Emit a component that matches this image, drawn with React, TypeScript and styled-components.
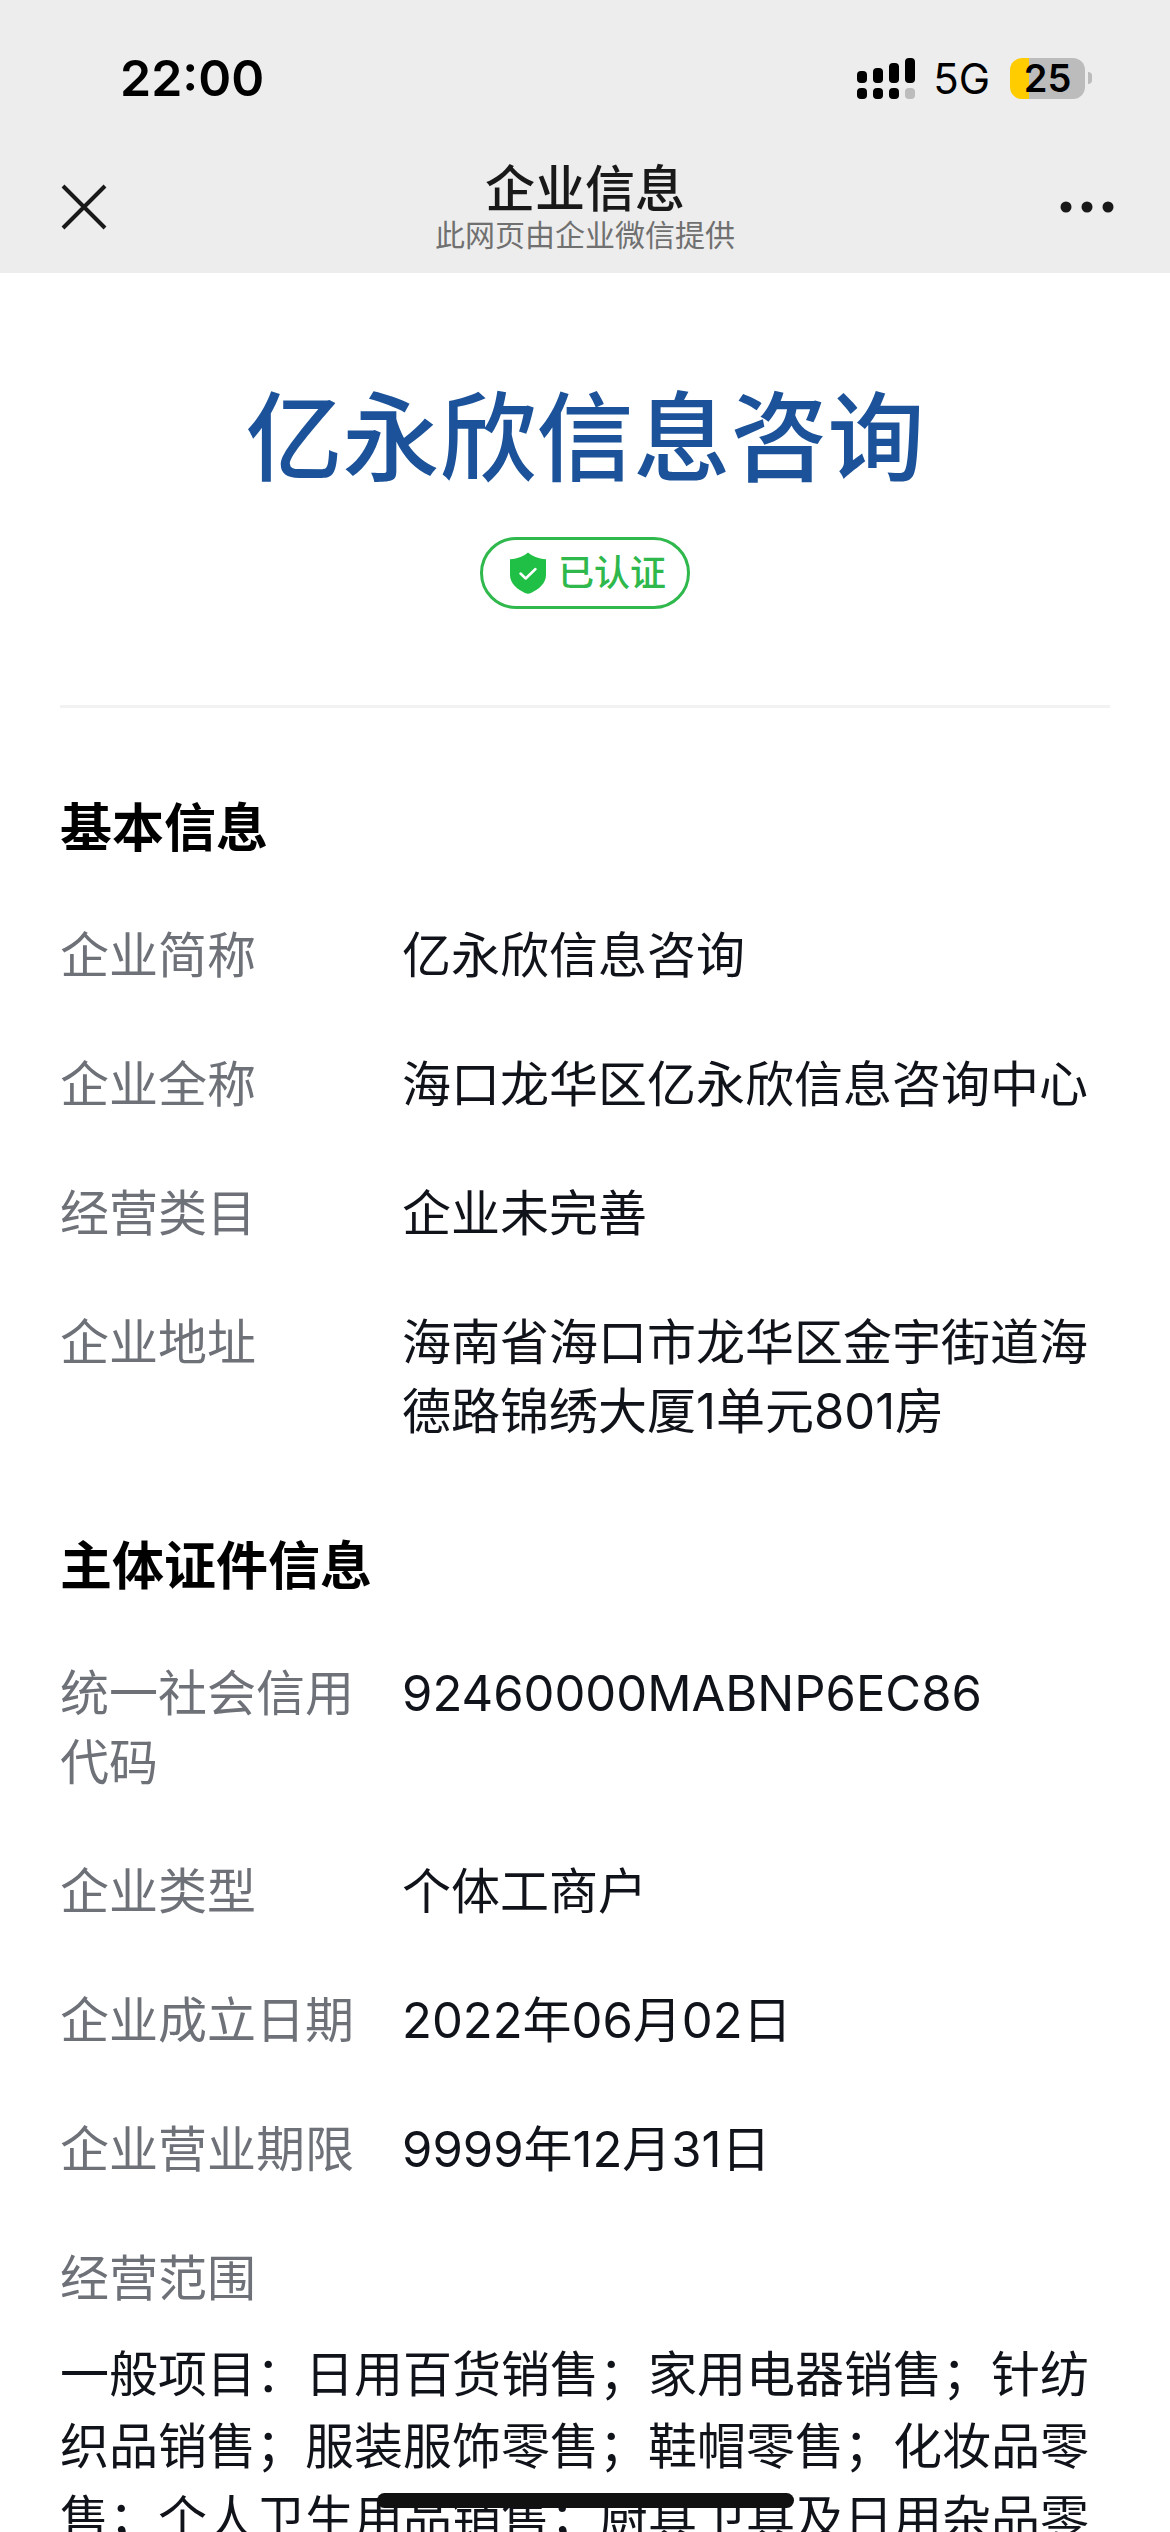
import React from "react";
import styled, { createGlobalStyle } from "styled-components";

const GlobalStyle = createGlobalStyle`
  *, *::before, *::after {
    box-sizing: border-box;
  }
  body {
    margin: 0;
    background: #fff;
    color: #11131a;
    font-family: Inter, "Noto Sans CJK SC", sans-serif;
    font-size: 49px;
    line-height: 69px;
  }
`;

const Screen = styled.div`
  display: flex;
  flex-direction: column;
  height: 100vh;
`;

const TopBar = styled.header`
  flex: none;
  background: #ededed;
`;

const StatusBar = styled.div`
  display: flex;
  align-items: center;
  justify-content: space-between;
  height: 156px;
  padding: 0 78px 0 120px;
  color: #000;
`;

const Clock = styled.time`
  font-size: 50px;
  font-weight: 600;
`;

const Indicators = styled.div`
  display: flex;
  align-items: center;
`;

const Network = styled.span`
  margin: 0 20px 0 18px;
  font-size: 42px;
`;

const Battery = styled.div`
  display: flex;
  align-items: center;
  gap: 3px;
`;

const BatteryBody = styled.div`
  display: flex;
  align-items: center;
  justify-content: center;
  width: 75px;
  height: 41px;
  border-radius: 12px;
  background: linear-gradient(to right, #ffcc00 25%, #bcbcbc 25%);
  font-size: 38px;
  font-weight: 600;
  line-height: 41px;
`;

const BatteryTip = styled.span`
  width: 4px;
  height: 12px;
  border-radius: 0 4px 4px 0;
  background: #bcbcbc;
`;

const NavBar = styled.nav`
  display: grid;
  grid-template-columns: 120px 1fr 120px;
  align-items: center;
  height: 117px;
  padding: 0 48px 16px;
  color: #191919;
`;

const NavButton = styled.button<{ $end?: boolean }>`
  display: flex;
  justify-content: ${(p) => (p.$end ? "flex-end" : "flex-start")};
  align-items: center;
  height: 72px;
  padding: ${(p) => (p.$end ? "0 8px" : "0 10px")};
  border: 0;
  background: none;
  color: inherit;
  cursor: pointer;
`;

const NavTitles = styled.div`
  display: flex;
  flex-direction: column;
  align-items: center;
`;

const NavTitle = styled.div`
  font-size: 50px;
  font-weight: 500;
  line-height: 56px;
`;

const NavSubtitle = styled.div`
  color: #707070;
  font-size: 30px;
  line-height: 36px;
`;

const Content = styled.main`
  flex: 1;
  min-height: 0;
  overflow-y: auto;
  padding: 0 60px;
  scrollbar-width: none;
`;

const Hero = styled.section`
  display: flex;
  flex-direction: column;
  align-items: center;
  gap: 31px;
  padding: 97px 0 96px;
  border-bottom: 3px solid #f2f2f2;
`;

const CompanyName = styled.h1`
  margin: 0;
  color: #1b5299;
  font-size: 97px;
  font-weight: 500;
  line-height: 136px;
`;

const Badge = styled.div`
  display: flex;
  align-items: center;
  gap: 12px;
  height: 72px;
  padding: 0 21px 0 27px;
  border: 3px solid #2fb84c;
  border-radius: 36px;
  color: #2fb84c;
  font-size: 36px;
  font-weight: 500;
`;

const Section = styled.section`
  padding-top: 84px;
`;

const SectionTitle = styled.h2`
  margin: 0 0 56px;
  color: #000;
  font-size: 52px;
  font-weight: 700;
  line-height: 73px;
`;

const Fields = styled.dl`
  display: flex;
  flex-direction: column;
  gap: 60px;
  margin: 0;
`;

const Field = styled.div<{ $stacked?: boolean }>`
  display: grid;
  grid-template-columns: ${(p) => (p.$stacked ? "1fr" : "294px 1fr")};
  gap: ${(p) => (p.$stacked ? "26px" : "48px")};
`;

const Label = styled.dt`
  color: #6e7278;
`;

const Value = styled.dd<{ $long?: boolean }>`
  margin: 0;
  line-height: ${(p) => (p.$long ? "72px" : "69px")};
`;

const HomeIndicator = styled.div`
  position: fixed;
  bottom: 24px;
  left: 50%;
  width: 417px;
  height: 15px;
  margin-left: -208px;
  border-radius: 8px;
  background: #111;
`;

const SignalIcon = () => (
  <svg width="58" height="41" viewBox="0 0 58 41" aria-hidden="true">
    <rect x="0" y="13" width="10" height="12" rx="4" />
    <rect x="16" y="10" width="10" height="15" rx="4" />
    <rect x="32" y="5" width="10" height="20" rx="4" />
    <rect x="48" y="0" width="10" height="25" rx="4" />
    <rect x="0" y="30" width="10" height="11" rx="4" />
    <rect x="16" y="30" width="10" height="11" rx="4" />
    <rect x="32" y="30" width="10" height="11" rx="4" />
    <rect x="48" y="30" width="10" height="11" rx="4" fill="#bcbcbc" />
  </svg>
);

const CloseIcon = () => (
  <svg width="52" height="52" viewBox="0 0 52 52" fill="none" stroke="currentColor" strokeWidth="4" aria-hidden="true">
    <path d="M5 5L47 47M47 5L5 47" />
  </svg>
);

const MoreIcon = () => (
  <svg width="54" height="12" viewBox="0 0 54 12" fill="currentColor" aria-hidden="true">
    <circle cx="6" cy="6" r="5.5" />
    <circle cx="27" cy="6" r="5.5" />
    <circle cx="48" cy="6" r="5.5" />
  </svg>
);

const ShieldIcon = () => (
  <svg width="36" height="42" viewBox="0 0 36 42" fill="none" aria-hidden="true">
    <path
      d="M18 0.500C22 4 28 6.700 36 7.300V23C36 32 28 37.500 21 41Q18 42.300 15 41C8 37.500 0 32 0 23V7.300C8 6.700 14 4 18 0.500Z"
      fill="#20bf45"
    />
    <path
      d="M10.500 21.500L15.700 26.500L25.500 17"
      stroke="#fff"
      strokeWidth="2.500"
      strokeLinecap="round"
      strokeLinejoin="round"
    />
  </svg>
);

const basicInfo = [
  ["企业简称", "亿永欣信息咨询"],
  ["企业全称", "海口龙华区亿永欣信息咨询中心"],
  ["经营类目", "企业未完善"],
  ["企业地址", "海南省海口市龙华区金宇街道海德路锦绣大厦1单元801房"],
];

const licenseInfo = [
  ["统一社会信用代码", "92460000MABNP6EC86"],
  ["企业类型", "个体工商户"],
  ["企业成立日期", "2022年06月02日"],
  ["企业营业期限", "9999年12月31日"],
];

const businessScope =
  "一般项目：日用百货销售；家用电器销售；针纺织品销售；服装服饰零售；鞋帽零售；化妆品零售；个人卫生用品销售；厨具卫具及日用杂品零";

export default function App() {
  return (
    <>
      <GlobalStyle />
      <Screen lang="zh-CN">
        <TopBar>
          <StatusBar>
            <Clock>22:00</Clock>
            <Indicators>
              <SignalIcon />
              <Network>5G</Network>
              <Battery>
                <BatteryBody>25</BatteryBody>
                <BatteryTip />
              </Battery>
            </Indicators>
          </StatusBar>
          <NavBar>
            <NavButton type="button" aria-label="关闭">
              <CloseIcon />
            </NavButton>
            <NavTitles>
              <NavTitle>企业信息</NavTitle>
              <NavSubtitle>此网页由企业微信提供</NavSubtitle>
            </NavTitles>
            <NavButton type="button" aria-label="更多" $end>
              <MoreIcon />
            </NavButton>
          </NavBar>
        </TopBar>
        <Content>
          <Hero>
            <CompanyName>亿永欣信息咨询</CompanyName>
            <Badge>
              <ShieldIcon />
              已认证
            </Badge>
          </Hero>
          <Section>
            <SectionTitle>基本信息</SectionTitle>
            <Fields>
              {basicInfo.map(([label, value]) => (
                <Field key={label}>
                  <Label>{label}</Label>
                  <Value>{value}</Value>
                </Field>
              ))}
            </Fields>
          </Section>
          <Section>
            <SectionTitle>主体证件信息</SectionTitle>
            <Fields>
              {licenseInfo.map(([label, value]) => (
                <Field key={label}>
                  <Label>{label}</Label>
                  <Value>{value}</Value>
                </Field>
              ))}
              <Field $stacked>
                <Label>经营范围</Label>
                <Value $long>{businessScope}</Value>
              </Field>
            </Fields>
          </Section>
        </Content>
        <HomeIndicator />
      </Screen>
    </>
  );
}
